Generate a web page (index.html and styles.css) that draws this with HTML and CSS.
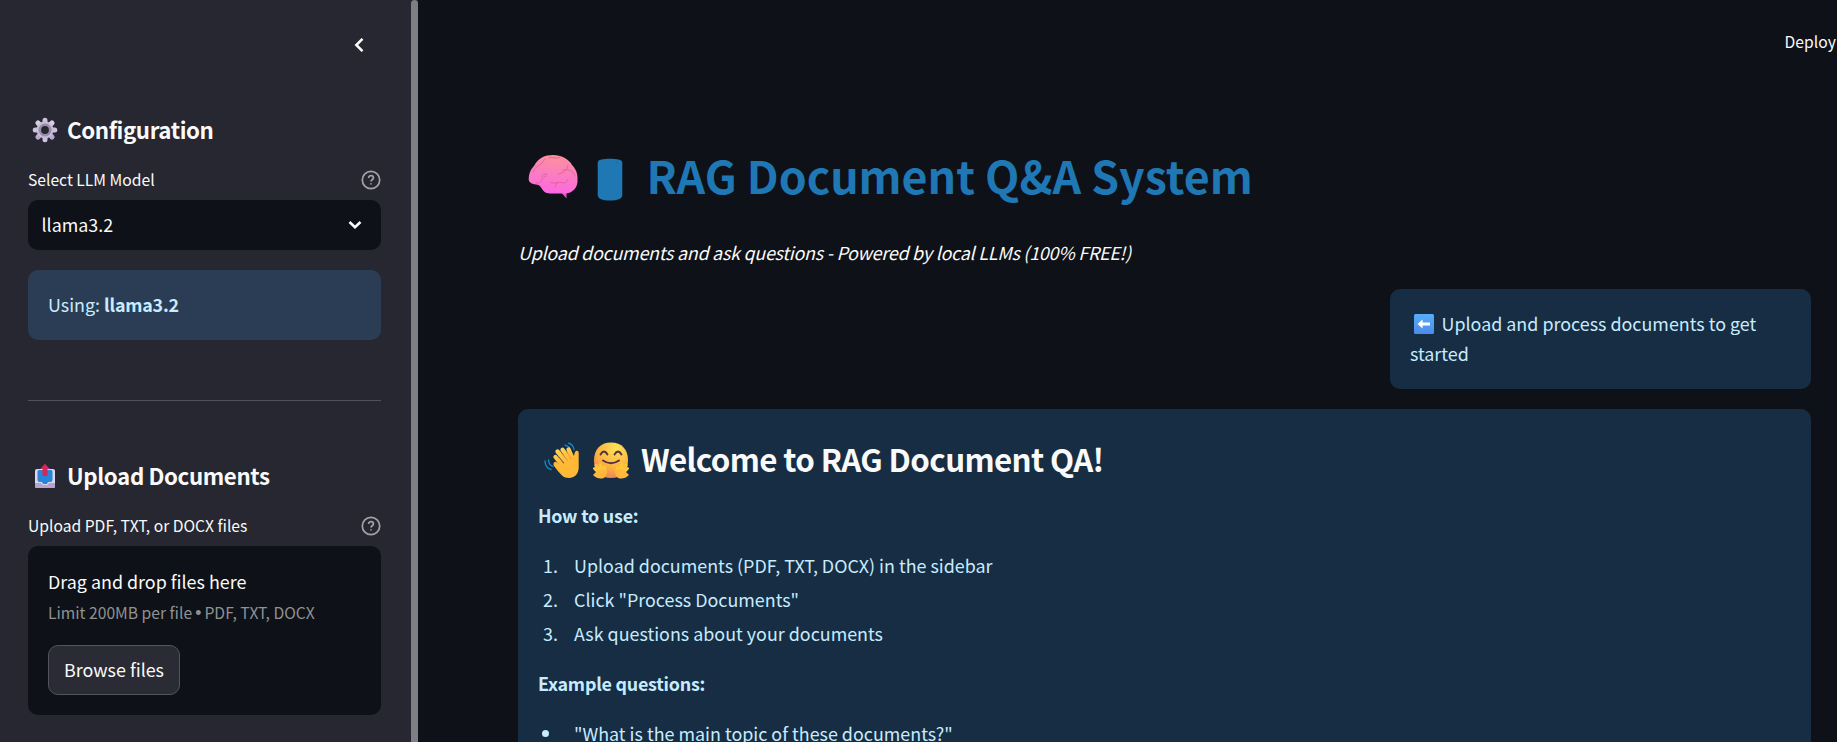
FILE: index.html
```html
<!DOCTYPE html>
<html lang="en">
<head>
<meta charset="utf-8">
<title>RAG Document Q&amp;A System</title>
<link rel="stylesheet" href="styles.css">
</head>
<body>
<div class="app">
  <aside class="sidebar">
    <div class="sidebar-content">
      <div class="sidebar-header">
        <svg class="collapse" viewBox="0 0 10 14"><path d="M8.500 .800 2.300 7l6.200 6.200"/></svg>
      </div>
      <h2 class="section-title">
        <svg class="gear" viewBox="0 0 26 26">
          <defs><linearGradient id="gearFill" x1="0" y1="0" x2="0" y2="1"><stop offset="0" stop-color="#d8cfe3"/><stop offset="1" stop-color="#bba9d3"/></linearGradient></defs>
          <g stroke="url(#gearFill)" stroke-width="5.2" stroke-linecap="round"><path d="M6 6 20 20M20 6 6 20"/></g>
          <path d="M13 3.2V7M13 19V22.8M3.2 13H7M19 13H22.8" stroke="#cdc1dd" stroke-width="5" stroke-linecap="round"/>
          <circle cx="13" cy="13" r="8.4" fill="#c8bcd6"/><circle cx="13" cy="13" r="5.2" fill="#262730" stroke="#988da8" stroke-width="2.6"/>
        </svg>
        <span>Configuration</span>
      </h2>
      <div class="label-row">
        <label class="label">Select LLM Model</label>
        <svg class="help" viewBox="0 0 20 20"><circle cx="10" cy="10" r="8.7"/><path d="M7.6 8c0-1.3 1-2.3 2.4-2.3s2.4.9 2.4 2.2c0 1.700-2.400 2-2.400 3.600"/><path d="M10 13.200v1.300"/></svg>
      </div>
      <div class="select"><span>llama3.2</span><svg class="down" viewBox="0 0 14 10"><path d="m1.500 2 5.500 5.300L12.500 2"/></svg></div>
      <div class="alert alert-side">Using: <strong>llama3.2</strong></div>
      <hr class="divider">
      <h2 class="section-title">
        <svg class="gear" viewBox="0 0 26 26">
          <defs><linearGradient id="upArrow" x1="0" x2="1"><stop offset="0" stop-color="#f0213b"/><stop offset="1" stop-color="#b72d78"/></linearGradient></defs>
          <rect x="3" y="6" width="20" height="19" rx="2" fill="#ddd6e6"/>
          <path d="M3 20h6l1.500 2h5l1.500-2h6v4q0 1-1 1H4q-1 0-1-1Z" fill="#b7a2d2"/>
          <path d="M7 7h12q1.500 0 1.500 1.500V17q0 2-2 2H16l-1 2h-4l-1-2H7.500q-2 0-2-2V8.500Q5.500 7 7 7Z" fill="#2785da"/>
          <path d="M13 .8 17.800 6H15.500v7h-5V6H8.200Z" fill="url(#upArrow)"/>
        </svg>
        <span>Upload Documents</span>
      </h2>
      <div class="label-row">
        <label class="label">Upload PDF, TXT, or DOCX files</label>
        <svg class="help" viewBox="0 0 20 20"><circle cx="10" cy="10" r="8.7"/><path d="M7.6 8c0-1.3 1-2.3 2.4-2.3s2.4.9 2.4 2.2c0 1.700-2.400 2-2.400 3.600"/><path d="M10 13.200v1.300"/></svg>
      </div>
      <div class="uploader">
        <div class="drop">Drag and drop files here</div>
        <div class="limit">Limit 200MB per file <span class="bullet">•</span> PDF, TXT, DOCX</div>
        <button class="browse">Browse files</button>
      </div>
    </div>
    <div class="scroll-thumb"></div>
  </aside>

  <main class="main">
    <header class="toolbar"><span>Deploy</span></header>
    <h1 class="title">
      <svg class="brain" viewBox="0 0 50 46">
        <defs><linearGradient id="brainFill" x1=".55" y1="0" x2=".4" y2="1"><stop offset="0" stop-color="#fb929d"/><stop offset=".5" stop-color="#fb7dc0"/><stop offset="1" stop-color="#ff66e3"/></linearGradient></defs>
        <path d="M31 36 38.500 44.500V37Z" fill="#ff4bcb"/>
        <path d="M.8 24C1 18 4 14 6 12 10 4 17 1 25 1c8 0 16 4 19 10 4 4 6 9 5.500 15C50 33 45 39 38 39.500H22c-5 0-7-3-9-6-1-2-3-3-5-3-5-.5-8-3-7.200-6.500Z" fill="url(#brainFill)"/>
        <g fill="none" stroke="#e0609f" stroke-width=".9" stroke-linecap="round"><path d="M5 18c2-6 6-5 9-9M14 9c2-1 1-3 3-4M21 4c4-2 7 2 11-1M40 11c-1 5-4 8-10 9M35 16c5-1 10 0 12 6M8 29c6 1 6-6 10-7M14 23c0-2 2-3 5-3M22 28c5 3 8-1 13 1 3 0 5-2 5-4M29 29l-2 4"/></g>
      </svg>
      <svg class="drum" viewBox="0 0 26 43"><path d="M.7 4.500C1 1.500 6 .8 13 .8S25 1.500 25.300 4.500V37c0 4-5 5.500-12.300 5.500S.7 41 .7 37Z" fill="#1f77b4"/><path d="M17.500 5q2-1.400 4 0Z" fill="#165f94"/></svg>
      <span>RAG Document Q&amp;A System</span>
    </h1>
    <p class="subtitle">Upload documents and ask questions - Powered by local LLMs (100% FREE!)</p>
    <div class="alert status">
      <svg class="left" viewBox="0 0 20 20"><defs><linearGradient id="tile" x1="0" y1="0" x2="0" y2="1"><stop offset="0" stop-color="#57adfc"/><stop offset="1" stop-color="#4d8bea"/></linearGradient></defs><rect width="20" height="20" rx="1.500" fill="url(#tile)"/><path d="M3.500 10 8.600 5.600v3H16v2.800H8.600v3Z" fill="#fff"/></svg><span>Upload and process documents to get</span><br>started
    </div>
    <section class="alert welcome">
      <h2 class="welcome-title">
        <svg class="wave" viewBox="0 0 36 36">
          <defs><linearGradient id="handFill" x1="0" y1="0" x2=".5" y2="1"><stop offset="0" stop-color="#ffd65a"/><stop offset="1" stop-color="#ffb02e"/></linearGradient></defs>
          <g fill="none" stroke="#168bd0" stroke-width="1.300" stroke-linecap="round"><path d="M24.500 1.200q4.500 1 5.500 6.300M21 3.200q4.500 1 5.500 5M1 19q.2 7 6 8.500M4.500 18q.2 5 4.500 6.500"/></g>
          <g stroke="url(#handFill)" stroke-width="4.300" stroke-linecap="round"><path d="m11.500 15 9 11M13.500 9.500l11 13M18.500 7.700l9 12M24.500 7.500l5 11"/></g>
          <path d="M10 20.500q1.500-1.500 3 0l4 3 13-10 .8-3q.5-2 2.300-1.700Q35 9 34.700 12v13c0 7-4 11-10 11-5 0-7-3-10-6l-5-6.500Q9 21.500 10 20.500Z" fill="#ffb936"/>
          <path d="m13.500 14 6 7M17.500 11.500l6 7M22.500 10l5 7" stroke="#e58b2d" stroke-width=".8" fill="none"/>
        </svg>
        <svg class="hug" viewBox="0 0 38 37">
          <defs><radialGradient id="faceFill" cx=".65" cy=".15" r=".95"><stop offset="0" stop-color="#ffe257"/><stop offset=".6" stop-color="#fbb23f"/><stop offset="1" stop-color="#f0765f"/></radialGradient></defs>
          <path d="M19 .5c11 0 17 7 17 18S30 36 19 36 2 29 2 18.500 8 .5 19 .5Z" fill="url(#faceFill)"/>
          <g fill="none" stroke="#573044" stroke-width="1.900" stroke-linecap="round"><path d="M8.500 12.500q3.500-6 7 0M22.500 12.500q3.500-6 7 0M11 18.500q8 5.500 16 0"/></g>
          <g stroke="#ffc63a" stroke-width="3" stroke-linecap="round"><path d="m2.500 26.500 6 6M4 23.500l6 7M8 22.500l4 8M12.500 25l1 5M35.500 26.500l-6 6M34 23.500l-6 7M30 22.500l-4 8M25.500 25l-1 5"/></g>
          <path d="M5 29q4-3 9-1 2 5-2 8-6 2-11-3ZM33 29q-4-3-9-1-2 5 2 8 6 2 11-3Z" fill="#ffb83b"/>
        </svg>
        <span>Welcome to RAG Document QA!</span>
      </h2>
      <p class="lead"><strong>How to use:</strong></p>
      <ol class="steps">
        <li><span class="marker">1.</span><span>Upload documents (PDF, TXT, DOCX) in the sidebar</span></li>
        <li><span class="marker">2.</span><span>Click "Process Documents"</span></li>
        <li><span class="marker">3.</span><span>Ask questions about your documents</span></li>
      </ol>
      <p class="lead lead-next"><strong>Example questions:</strong></p>
      <ul class="steps">
        <li><span class="marker"><i class="dot"></i></span><span>"What is the main topic of these documents?"</span></li>
      </ul>
    </section>
  </main>
</div>
</body>
</html>
```
FILE: styles.css
```css
* { box-sizing: border-box; }
html, body { height: 100%; }
body {
  margin: 0;
  overflow: hidden;
  background: #0e1117;
  color: #fafafa;
  font-family: "Noto Sans CJK SC", "Noto Sans CJK JP", sans-serif;
  font-size: 17.9px;
  line-height: 30px;
}
h1, h2, p, ol, ul { margin: 0; padding: 0; }
ol, ul { list-style: none; }
svg { display: block; flex: none; }
span { white-space: nowrap; }
strong { letter-spacing: -.24px; }

.app { display: flex; height: 742px; overflow: hidden; }

/* Sidebar */
.sidebar { display: flex; width: 418px; flex: none; background: #262730; }
.sidebar-content { width: 411px; padding: 0 30px 0 28px; }
.scroll-thumb { width: 7px; background: #7f7e83; border-radius: 4px 4px 0 0; }
.sidebar-header { display: flex; justify-content: flex-end; height: 115px; padding: 38px 17px 0 0; }
.collapse { width: 10px; height: 14px; fill: none; stroke: #fafafa; stroke-width: 2.5; }
.section-title { display: flex; align-items: center; gap: 9px; height: 30px; padding-left: 4px; font-size: 22.3px; font-weight: 700; letter-spacing: -.4px; }
.section-title span { padding-bottom: 2px; }
.gear { width: 26px; height: 26px; }
.label-row { display: flex; justify-content: space-between; align-items: center; height: 30px; margin-top: 20px; }
.label { font-size: 15.67px; }
.help { width: 20px; height: 20px; fill: none; stroke: #a3a4a8; stroke-width: 1.7; }
.select { display: flex; align-items: center; justify-content: space-between; height: 50px; margin-top: 5px; padding: 0 19px 0 13.5px; border-radius: 10px; background: #0e1117; }
.select span { padding-bottom: 2px; }
.down { width: 14px; height: 10px; fill: none; stroke: #fafafa; stroke-width: 2.6; }
.alert { border-radius: 10px; background: #172d43; color: #c7ebff; padding: 19px 20px 20px; }
.alert-side { height: 70px; margin-top: 20px; background: #2b3d55; }
.divider { height: 1px; margin: 60px 0 60px; border: 0; background: #515159; }
.uploader { height: 169px; margin-top: 5px; padding: 20px; border-radius: 10px; background: #0e1117; }
.limit { padding-top: 2px; color: #8f9194; font-size: 15.67px; white-space: nowrap; }
.bullet { margin: 0 -.4px; font-family: "Liberation Sans", sans-serif; font-size: 17.5px; line-height: 1; }
.browse { width: 132px; height: 50px; margin-top: 17px; padding: 0 0 2px; border: 1px solid #54545d; border-radius: 10px; background: #2b2b35; color: #fafafa; font: inherit; }

/* Main area */
.main { flex: 1; min-width: 0; padding: 0 26px 0 100px; }
.toolbar { display: flex; justify-content: flex-end; height: 142px; margin-right: -26px; padding: 27px 1px 0 0; font-size: 15.67px; letter-spacing: .05px; }
.title { display: flex; align-items: center; height: 70px; padding-left: 9.5px; color: #1f77b4; font-size: 44.65px; font-weight: 700; }
.title span { padding-bottom: 4px; }
.brain { width: 50px; height: 46px; }
.drum { width: 26px; height: 43px; margin: 4px 23.500px 0 19.500px; }
.subtitle { height: 30px; margin-top: 25px; font-style: italic; letter-spacing: -.24px; }
.status { width: 421px; height: 100px; margin: 22px 0 0 auto; }
.left { display: inline-block; width: 20px; height: 20px; margin: 0 7.5px 0 4px; vertical-align: -3px; }
.welcome { height: 500px; margin-top: 20px; }
.welcome-title { display: flex; align-items: center; height: 46px; margin-top: 9px; padding-left: 6px; color: #fafafa; font-size: 31.3px; font-weight: 700; letter-spacing: -.62px; }
.welcome-title span { padding-bottom: 2px; }
.wave { width: 36px; height: 36px; }
.hug { width: 38px; height: 37px; margin: 0 11px 0 12px; }
.lead { margin-top: 17px; }
.lead-next { margin-top: 18px; }
.steps { margin-top: 18px; }
.steps li { display: flex; height: 34px; padding-top: 2px; }
.marker { width: 36px; padding-left: 5px; }
.dot { display: block; width: 7px; height: 7px; margin: 12px 0 0 -1px; border-radius: 50%; background: #c7ebff; }
```
